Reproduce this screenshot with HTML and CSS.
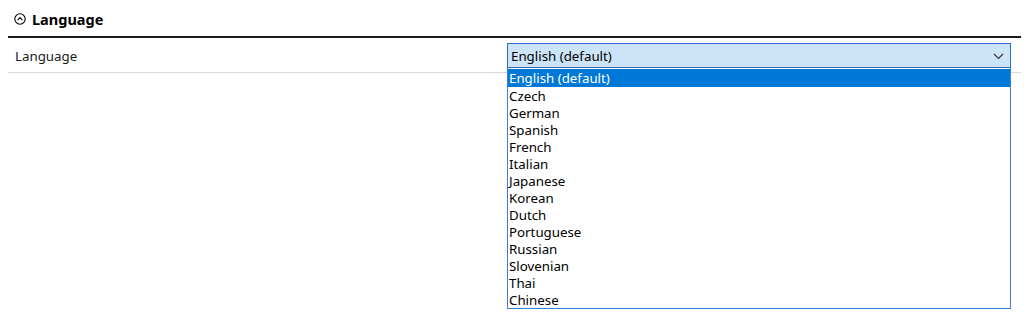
FILE: index.html
```html
<!DOCTYPE html>
<html>
<head>
<meta charset="utf-8">
<link rel="stylesheet" href="styles.css">
</head>
<body>
<div class="panel">
  <div class="section-head">
    <svg class="collapse-icon" width="12" height="12" viewBox="0 0 12 12">
      <circle cx="6" cy="6" r="5.2" fill="none" stroke="#000" stroke-width="1.1"/>
      <path d="M3.6 7.1 L6 4.7 L8.4 7.1" fill="none" stroke="#000" stroke-width="1.2"/>
    </svg>
    <span class="section-title">Language</span>
  </div>
  <div class="row">
    <div class="label">Language</div>
    <div class="field">
      <div class="select">
        <span class="select-value">English (default)</span>
        <svg class="chevron" width="11" height="7" viewBox="0 0 11 7">
          <path d="M1 1 L5.5 5.5 L10 1" fill="none" stroke="#333" stroke-width="1.2"/>
        </svg>
      </div>
      <ul class="listbox">
        <li class="option selected">English (default)</li>
        <li class="option">Czech</li>
        <li class="option">German</li>
        <li class="option">Spanish</li>
        <li class="option">French</li>
        <li class="option">Italian</li>
        <li class="option">Japanese</li>
        <li class="option">Korean</li>
        <li class="option">Dutch</li>
        <li class="option">Portuguese</li>
        <li class="option">Russian</li>
        <li class="option">Slovenian</li>
        <li class="option">Thai</li>
        <li class="option">Chinese</li>
      </ul>
    </div>
  </div>
</div>
</body>
</html>
```
FILE: styles.css
```css
html, body {
  margin: 0;
  padding: 0;
  background: #fff;
  font-family: "Noto Sans", "DejaVu Sans", sans-serif;
  font-size: 13.3px;
  color: #000;
  min-height: 320px;
}
.panel {
  margin: 0 3px 0 8px;
  min-height: 320px;
}
.section-head {
  box-sizing: border-box;
  border-bottom: 2px solid #1a1a1a;
  display: flex;
  align-items: center;
  padding-left: 6px;
  padding-top: 1px;
  gap: 6px;
  height: 38px;
}
.collapse-icon {
  display: block;
}
.section-title {
  font-weight: bold;
  font-size: 14.5px;
}
.row {
  display: flex;
  height: 35px;
  box-sizing: border-box;
  border-bottom: 1px solid #d9d9d9;
}
.label {
  width: 499px;
  padding-left: 7px;
  box-sizing: border-box;
  display: flex;
  align-items: center;
  color: #1a1a1a;
  padding-top: 1px;
}
.field {
  position: relative;
  width: 504px;
  padding-top: 5px;
}
.select {
  height: 25px;
  box-sizing: border-box;
  border: 1px solid #2a6cc7;
  background: #cce4f7;
  display: flex;
  align-items: center;
  justify-content: space-between;
  padding: 1px 6px 0 3px;
}
.select-value {
  color: #000;
}
.chevron {
  display: block;
}
.listbox {
  position: absolute;
  top: 30px;
  left: 0;
  width: 504px;
  box-sizing: border-box;
  margin: 0;
  padding: 1px 0 0;
  list-style: none;
  background: #fff;
  border: 1px solid #3c7fd6;
  border-top: none;
  z-index: 5;
}
.option {
  height: 17px;
  line-height: 19px;
  padding-left: 1px;
  color: #000;
}
.option.selected {
  height: 18px;
  background: #0078d7;
  color: #fff;
}
```
